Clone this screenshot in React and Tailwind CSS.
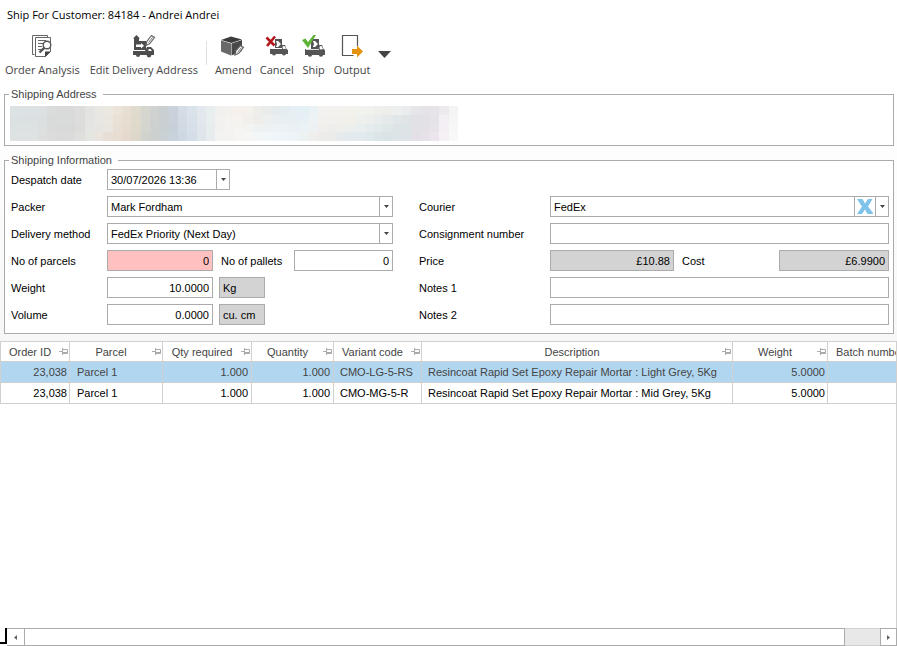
import { useState } from 'react'

const ORDERS = [
  { id: 1, order: '23,038', parcel: 'Parcel 1', required: '1.000', qty: '1.000', code: 'CMO-LG-5-RS', desc: 'Resincoat Rapid Set Epoxy Repair Mortar : Light Grey, 5Kg', weight: '5.0000' },
  { id: 2, order: '23,038', parcel: 'Parcel 1', required: '1.000', qty: '1.000', code: 'CMO-MG-5-R', desc: 'Resincoat Rapid Set Epoxy Repair Mortar : Mid Grey, 5Kg', weight: '5.0000' },
]

const COLUMNS = [
  { name: 'Order ID', width: 'w-[69px]' },
  { name: 'Parcel', width: 'w-[93px]' },
  { name: 'Qty required', width: 'w-[89px]' },
  { name: 'Quantity', width: 'w-[82px]' },
  { name: 'Variant code', width: 'w-[88px]' },
  { name: 'Description', width: 'w-auto' },
  { name: 'Weight', width: 'w-[95px]' },
]

// Address is redacted: one list of block colours per row
const REDACTED = [
  'dde2e4 dce1e3 dce1e3 dce0e1 dadbdb dadada dadada dddddc e3e3e1 e8e7e3 ebe8e2 ebe4da e7dfd4 dfdbcf d4d6cf ced2d0 cad0d2 c9d2da d4dde6 dae2ea e2e8ed e8edee f1f0ee f4f2ef f6f1ed f5f1ec eeede9 eaecea e6ecee e6edf1 e6eff3 e5f0f4 ebf2f5 f3f2f1 f4f2ef f3f2ee f3f2ed f2f2ee f1f1ed eff0ec eeefeb edeeee e9ebed e5e5ea e5e3e8 e6e4e8 eceaed f4f4f5',
  'dbe0e2 dbe0e2 dce0e2 dcdfe0 d9dbdb d9dada d9dada dcdddc e4e4e2 e9e7e3 eae7e1 eae1d6 e7ddd0 e0dacd d5d6ce ced1cf cad0d2 c9d2da d2dbe4 d8e1ea e1e7ed e9edee f3f1ef f5f3f0 f6f2ed f1f0ec eeedea ecefed e8eff1 e7eef4 e7eff4 e7f0f4 edf2f5 f2f1ed f2f1ed f1f0eb f1f0eb eef0ed ecefed e9ecec e6e9ea e1e6e8 e0e4e7 e2e1e6 e4e1e6 e6e3e8 f3eff4 f7f6f7',
  'dce1e2 dce1e2 dce1e2 dbdfe0 d9dada d8d9d9 d9d9d9 dcdddb e4e4e2 e7e5e1 e9e5df e7dfd5 e5dccf dfd9cc d3d5ce ced2cf c9d0d2 c8d1d9 d1dae2 d7dfe8 dfe6eb e7edee f2f1ef f4f3f1 f6f4f0 f3f3f1 f0f2f1 edf1f2 ecf2f5 ebf1f5 eaf1f6 eaf2f5 edf1f1 f0efec eeedeb eeeeeb ecefee e9eeee e6eced e3eaec dfe7e9 dce4e6 dde4e7 e1e1e6 e3e0e6 e7e3e9 f3eff4 f8f7f8',
  'dee2e2 dee2e2 dee2e2 dddfdf dbdcdb dadada dbdbdb dfdfdd e5e5e2 e9e4de e7dfd6 e7ddd0 e4d9cc ddd6ca d0d3cd ccd1d0 c9d1d4 c8d2dc cdd8e2 d5dee8 dfe6eb e7edee f2f2f0 f4f3f1 f7f5f3 f6f6f4 f3f6f7 f1f6f9 f0f5f9 eef4f8 edf3f6 ecf1f2 eeefed edeceb ebebea e5ebed e3eaed e2eaed dfe8ea dce6e8 dae4e6 dde4e7 dfe4e8 e4e0e8 e7e1ea ede5ed f5f0f4 f9f8f8',
].map((row) => row.split(' '))

function OrderAnalysisIcon() {
  return (
    <svg className="h-6 w-6" viewBox="0 0 24 24" fill="none" stroke="#666" aria-hidden="true">
      <path d="M4.5 20.5h-2v-19h15v2M5.5 3.5h15v14l-5 5h-10z" />
      <path d="M15 23v-5.500h6z" fill="#444" stroke="none" />
      <path d="M8 6.500h8M8 9.500h5M8 12.500h4M8 15.500h4" />
      <circle cx="17" cy="11" r="3.800" fill="#fff" stroke="#555" strokeWidth="1.400" />
      <path d="M14.200 13.800l-4.700 4.700" stroke="#555" strokeWidth="2.400" />
    </svg>
  )
}

function EditAddressIcon() {
  return (
    <svg className="h-6 w-6" viewBox="0 0 24 24" fill="#4d4d4d" aria-hidden="true">
      <path d="M1 4.500L4.500 1 8 4.500H7V7H2V4.500z" />
      <path d="M2 7h12v9H2z" />
      <path d="M1 17h12l2-4h4l3 3v5H1z" />
      <path d="M4 10.500h5V9l3 2.700-3 2.700v-1.500H4z" fill="#fff" />
      <path d="M2 16.500h11" stroke="#fff" />
      <path d="M16.500 15h2l1.500 2h-3.500z" fill="#fff" />
      <circle cx="6" cy="21" r="2" />
      <circle cx="17" cy="21" r="2.400" />
      <path d="M14 11.500l.8-4 4.700-6 3 2-4.700 6z" fill="#fff" stroke="#666" strokeWidth="1.200" />
      <path d="M16.500 8.500l4-5" stroke="#777" />
    </svg>
  )
}

function AmendIcon() {
  return (
    <svg className="h-6 w-6" viewBox="0 0 24 24" aria-hidden="true">
      <path d="M0 6l10-3.500L21 5.500 10.500 9z" fill="#3d3d3d" />
      <path d="M0 6.500L10 9.500v12L0 17.500z" fill="#696969" />
      <path d="M10.500 9.500L21 6v11l-10.500 4.500z" fill="#484848" />
      <path d="M14 21l1-4.500 4.500-5 3 2-4.700 5.800z" fill="#fff" stroke="#666" strokeWidth="1.200" />
      <path d="M16.500 18.500l4-5" stroke="#777" />
    </svg>
  )
}

function CancelIcon() {
  return (
    <svg className="h-6 w-6" viewBox="0 0 24 24" aria-hidden="true">
      <g fill="#555">
        <path d="M10 5h7v9h-7z" />
        <path d="M5 15h12v-4h3l1.500 4 1.500 1v4H5z" />
        <circle cx="9" cy="19.500" r="2" />
        <circle cx="19" cy="19.500" r="2" />
      </g>
      <path d="M11 7h2l3 3-3 3h-2l1-3z" fill="#fff" />
      <path d="M6 14.500h11M18 14.500v-2h1.500l1 2z" stroke="#fff" fill="#fff" strokeWidth=".8" />
      <path d="M1.500 3.500l8 8M10 2.500l-8 9.500" stroke="#b5161b" strokeWidth="2.600" fill="none" />
    </svg>
  )
}

function ShipIcon() {
  return (
    <svg className="h-6 w-6" viewBox="0 0 24 24" aria-hidden="true">
      <g fill="#555">
        <path d="M9 5h8v10H9z" />
        <path d="M3 15h14v-4h3l1.500 4 1.500 1v5H3z" />
        <circle cx="8" cy="20.500" r="2.200" />
        <circle cx="19" cy="20.500" r="2.200" />
      </g>
      <path d="M11 7h2l3 3-3 3h-2l1-3z" fill="#fff" />
      <path d="M4 15.500h13M18 15v-2.500h1.500l1 2.500z" stroke="#fff" fill="#fff" strokeWidth=".8" />
      <path d="M0 6l3.500-1.500L6 8l5.500-7H14L6 14z" fill="#5fb336" />
    </svg>
  )
}

function OutputIcon() {
  return (
    <svg className="h-6 w-6" viewBox="0 0 24 24" aria-hidden="true">
      <path d="M17.500 12V1.500h-15v20h11" fill="#fff" stroke="#555" strokeWidth="1.200" />
      <path d="M12 15h5v-3.500l6 6-6 6V20h-5z" fill="#e4930f" />
    </svg>
  )
}

function PinIcon() {
  return (
    <svg className="h-[7px] w-[9px] shrink-0" viewBox="0 0 9 7" fill="none" stroke="#aaa" aria-hidden="true">
      <path d="M0 3.500h3M3.500 0v7M4 1.500h4.500v4H4M4 4.500h4" />
    </svg>
  )
}

function ToolButton({ icon, label }) {
  return (
    <button type="button" className="flex flex-col items-center gap-1 text-[#444] hover:bg-gray-100">
      {icon}
      <span className="whitespace-nowrap text-[11px] leading-4">{label}</span>
    </button>
  )
}

function DropArrow() {
  return (
    <span className="pointer-events-none flex w-[13px] shrink-0 items-center justify-center border-l border-[#ababab]">
      <svg className="h-[3px] w-[5px]" viewBox="0 0 5 3" fill="#444" aria-hidden="true"><path d="M0 0h5L2.500 3z" /></svg>
    </span>
  )
}

function Combo({ id, value }) {
  return (
    <div className="flex h-[21px] w-full border border-[#ababab] bg-white">
      <select id={id} defaultValue={value} className="min-w-0 flex-1 appearance-none px-[3px] outline-none">
        <option>{value}</option>
      </select>
      <DropArrow />
    </div>
  )
}

const box = 'h-[21px] min-w-0 border border-[#ababab] px-[3px] outline-none'
const cell = 'h-[21px] overflow-hidden border-r border-b border-[#d0d0d0] py-0 whitespace-nowrap'

function Label({ id, children, className = 'w-24' }) {
  return <label htmlFor={id} className={`shrink-0 whitespace-nowrap ${className}`}>{children}</label>
}

function Group({ title, children, className }) {
  return (
    <fieldset className={`ml-1 mr-[3px] min-w-0 border border-[#ababab] bg-white ${className}`}>
      <legend className="ml-1 pl-0.5 pr-1.5 leading-4 text-[#444]">{title}</legend>
      {children}
    </fieldset>
  )
}

export default function App() {
  const [selected, setSelected] = useState(1)

  return (
    <main className="flex min-h-screen flex-col bg-white font-['Liberation_Sans',Arial,sans-serif] text-[11px] leading-4 text-black">
      <h1 className="px-[7px] pt-[7px] font-['Open_Sans','Segoe_UI',sans-serif] text-[11px] leading-4">Ship For Customer: 84184 - Andrei Andrei</h1>

      <nav className="flex gap-2 px-[5px] pt-[11px] pb-2 font-['Open_Sans','Segoe_UI',sans-serif]" aria-label="Shipment">
        <div className="flex gap-2.5">
          <ToolButton icon={<OrderAnalysisIcon />} label="Order Analysis" />
          <ToolButton icon={<EditAddressIcon />} label="Edit Delivery Address" />
        </div>
        <div className="mt-[7px] h-6 w-px bg-[#e1e1e1]" />
        <div className="flex gap-2">
          <ToolButton icon={<AmendIcon />} label="Amend" />
          <ToolButton icon={<CancelIcon />} label="Cancel" />
          <ToolButton icon={<ShipIcon />} label="Ship" />
          <ToolButton icon={<OutputIcon />} label="Output" />
          <button type="button" aria-label="More" className="flex h-10 items-center">
            <svg className="h-[7px] w-[13px]" viewBox="0 0 13 7" fill="#444"><path d="M0 0h13L6.500 7z" /></svg>
          </button>
        </div>
      </nav>

      <div className="bg-linear-to-b from-white to-[#f7f7f7] pb-[7px]">
        <Group title="Shipping Address" className="pb-1">
          <svg className="mt-1 ml-[5px] h-[35px] w-[448px]" viewBox="0 0 48 4" preserveAspectRatio="none" shapeRendering="crispEdges" role="img" aria-label="Address hidden">
            {REDACTED.map((row, y) => row.map((c, x) => (
              <rect key={`${x}-${y}`} x={x} y={y} width="1" height="1" fill={`#${c}`} />
            )))}
          </svg>
        </Group>

        <Group title="Shipping Information" className="mt-1.5 pb-2">
          <div className="flex gap-[26px] pl-1.5 pr-1 pt-px">
            <div className="flex w-[382px] shrink-0 flex-col gap-1.5">
              <div className="flex items-center">
                <Label id="date">Despatch date</Label>
                <div className="flex h-[21px] w-[123px] border border-[#ababab] bg-white">
                  <input id="date" defaultValue="30/07/2026 13:36" className="min-w-0 flex-1 px-[3px] outline-none" />
                  <DropArrow />
                </div>
              </div>
              <div className="flex items-center">
                <Label id="packer">Packer</Label>
                <Combo id="packer" value="Mark Fordham" />
              </div>
              <div className="flex items-center">
                <Label id="method">Delivery method</Label>
                <Combo id="method" value="FedEx Priority (Next Day)" />
              </div>
              <div className="flex items-center">
                <Label id="parcels">No of parcels</Label>
                <input id="parcels" defaultValue="0" className={`${box} w-[106px] bg-[#ffc0c0] text-right`} />
                <Label id="pallets" className="ml-2 w-[73px]">No of pallets</Label>
                <input id="pallets" defaultValue="0" className={`${box} flex-1 bg-white text-right`} />
              </div>
              <div className="flex items-center">
                <Label id="weight">Weight</Label>
                <input id="weight" defaultValue="10.0000" className={`${box} w-[106px] bg-white text-right`} />
                <input aria-label="Weight unit" readOnly defaultValue="Kg" className={`${box} ml-1.5 w-[46px] bg-[#d3d3d3]`} />
              </div>
              <div className="flex items-center">
                <Label id="volume">Volume</Label>
                <input id="volume" defaultValue="0.0000" className={`${box} w-[106px] bg-white text-right`} />
                <input aria-label="Volume unit" readOnly defaultValue="cu. cm" className={`${box} ml-1.5 w-[46px] bg-[#d3d3d3]`} />
              </div>
            </div>

            <div className="flex min-w-0 flex-1 flex-col justify-end gap-1.5">
              <div className="flex items-center">
                <Label id="courier" className="w-[131px]">Courier</Label>
                <div className="flex h-[21px] min-w-0 flex-1 border border-[#ababab] bg-white">
                  <select id="courier" defaultValue="FedEx" className="min-w-0 flex-1 appearance-none px-[3px] outline-none">
                    <option>FedEx</option>
                  </select>
                  <button type="button" aria-label="Clear courier" className="flex w-[21px] items-center justify-center border-l border-[#ababab]">
                    <svg className="h-[15px] w-4" viewBox="0 0 16 15" fill="#7fc3ea"><path d="M0 0h5.500L8 4.500 11 0h4.500L11 7.500 16 14v1h-5.500L8 10.500 5 15H0l5-7.500z" /></svg>
                  </button>
                  <DropArrow />
                </div>
              </div>
              <div className="flex items-center">
                <Label id="consignment" className="w-[131px]">Consignment number</Label>
                <input id="consignment" className={`${box} flex-1 bg-white`} />
              </div>
              <div className="flex items-center">
                <Label id="price" className="w-[131px]">Price</Label>
                <input id="price" readOnly defaultValue="£10.88" className={`${box} flex-1 bg-[#d3d3d3] text-right`} />
                <Label id="cost" className="ml-2 w-[97px]">Cost</Label>
                <input id="cost" readOnly defaultValue="£6.9900" className={`${box} w-[110px] bg-[#d3d3d3] text-right`} />
              </div>
              <div className="flex items-center">
                <Label id="notes1" className="w-[131px]">Notes 1</Label>
                <input id="notes1" className={`${box} flex-1 bg-white`} />
              </div>
              <div className="flex items-center">
                <Label id="notes2" className="w-[131px]">Notes 2</Label>
                <input id="notes2" className={`${box} flex-1 bg-white`} />
              </div>
            </div>
          </div>
        </Group>
      </div>

      <section className="flex-1 overflow-hidden border-t border-r border-[#d0d0d0]">
        <table className="w-full table-fixed border-separate border-spacing-0 border-l border-[#d0d0d0]">
          <thead className="text-[#444]">
            <tr>
              {COLUMNS.map((c) => (
                <th key={c.name} className={`h-5 border-r border-b border-[#d0d0d0] p-0 font-normal ${c.width}`}>
                  <div className="flex items-center pr-px">
                    <span className="flex-1 whitespace-nowrap text-center">{c.name}</span>
                    <PinIcon />
                  </div>
                </th>
              ))}
              <th className="h-5 w-[68px] overflow-hidden border-b border-[#d0d0d0] p-0 pl-2 text-left font-normal whitespace-nowrap">Batch number</th>
            </tr>
          </thead>
          <tbody>
            {ORDERS.map((o) => (
              <tr
                key={o.id}
                onClick={() => setSelected(o.id)}
                className={selected === o.id ? 'bg-[#b1d6f0] text-[#444]' : 'text-black'}
              >
                <td className={`${cell} pr-0.5 text-right`}>{o.order}</td>
                <td className={`${cell} pl-[7px]`}>{o.parcel}</td>
                <td className={`${cell} pr-[3px] text-right`}>{o.required}</td>
                <td className={`${cell} pr-[3px] text-right`}>{o.qty}</td>
                <td className={`${cell} pl-1.5`}>{o.code}</td>
                <td className={`${cell} pl-1.5`}>{o.desc}</td>
                <td className={`${cell} pr-0.5 text-right`}>{o.weight}</td>
                <td className="border-b border-[#d0d0d0]" />
              </tr>
            ))}
          </tbody>
        </table>
      </section>

      <footer className="flex h-[18px]">
        <div className="h-4 w-[7px] border-r-2 border-b-2 border-black" />
        <button type="button" aria-label="Scroll left" className="flex w-[17px] items-center justify-center border-y border-[#ababab]">
          <svg className="h-[5px] w-[3px]" viewBox="0 0 3 5" fill="#666"><path d="M3 0v5L0 2.500z" /></svg>
        </button>
        <div className="flex-1 border border-[#ababab] bg-white" />
        <div className="w-[35px] border-y border-[#d0d0d0] bg-[#e8e8e8]" />
        <button type="button" aria-label="Scroll right" className="flex w-[17px] items-center justify-center border border-[#ababab]">
          <svg className="h-[5px] w-[3px]" viewBox="0 0 3 5" fill="#666"><path d="M0 0v5l3-2.500z" /></svg>
        </button>
      </footer>
    </main>
  )
}
